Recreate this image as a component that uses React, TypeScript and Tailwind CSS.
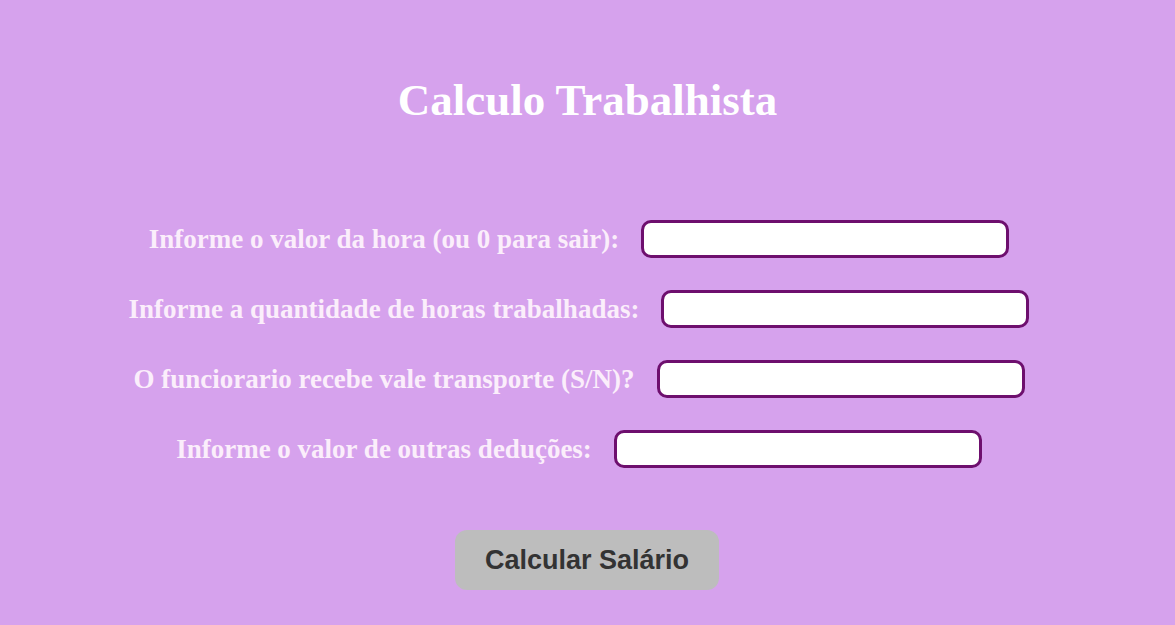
import React from "react"

const fields = [
  "Informe o valor da hora (ou 0 para sair):",
  "Informe a quantidade de horas trabalhadas:",
  "O funciorario recebe vale transporte (S/N)?",
  "Informe o valor de outras deduções:",
]

export default function App() {
  return (
    <div className="min-h-screen bg-[#d6a2ed] flex flex-col items-center pt-[72px]">
      <h1 className="font-['Liberation_Serif',_serif] font-bold text-[45px] leading-[56px] text-white">
        Calculo Trabalhista
      </h1>

      <form className="mt-[92px] flex flex-col items-center gap-[32px]">
        {fields.map((label) => (
          <div key={label} className="flex items-center pr-[17px]">
            <label className="font-['Liberation_Serif',_serif] font-bold text-[27px] leading-[32px] text-[#fbeefb] mr-[22px]">
              {label}
            </label>
            <input
              type="text"
              className="w-[368px] h-[38px] bg-white border-[3px] border-[#6e0f6e] rounded-[10px] outline-none"
            />
          </div>
        ))}

        <button
          type="button"
          className="mt-[30px] ml-[-1px] w-[264px] h-[60px] rounded-[12px] bg-[#bdbdbd] text-[#333333] font-['Liberation_Sans',_sans-serif] font-bold text-[27px]"
        >
          Calcular Salário
        </button>
      </form>
    </div>
  )
}
